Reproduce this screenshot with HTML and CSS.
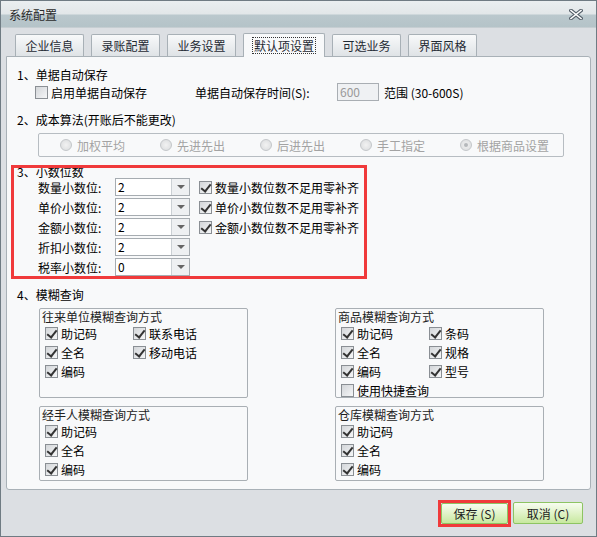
FILE: index.html
```html
<!DOCTYPE html>
<html lang="zh-CN">
<head>
    <meta charset="UTF-8">
    <title>系统配置</title>
    <link rel="stylesheet" href="styles.css">
</head>
<body>

<div class="window">
    <div class="titlebar">
        <span class="title">系统配置</span>
        <span class="close">
            <svg width="14" height="11" viewBox="0 0 14 11">
                <path d="M2 1.5 L12 9.5 M12 1.5 L2 9.5" stroke="#55606a" stroke-width="3.6" stroke-linecap="square"/>
                <path d="M2 1.5 L12 9.5 M12 1.5 L2 9.5" stroke="#ffffff" stroke-width="1.6" stroke-linecap="square"/>
            </svg>
        </span>
    </div>

    <div class="tabs">
        <div class="tab">企业信息</div>
        <div class="tab">录账配置</div>
        <div class="tab">业务设置</div>
        <div class="tab active"><span class="focus">默认项设置</span></div>
        <div class="tab">可选业务</div>
        <div class="tab">界面风格</div>
    </div>

    <div class="panel">
        <!-- 1. auto save -->
        <div class="heading">1、单据自动保存</div>
        <div class="autosave">
            <label class="check"><span class="cb"></span>启用单据自动保存</label>
            <span class="save-time">单据自动保存时间(S):</span>
            <span class="num-input">600</span>
            <span class="range">范围 (30-600S)</span>
        </div>

        <!-- 2. cost method -->
        <div class="heading h2">2、成本算法(开账后不能更改)</div>
        <div class="radios">
            <label class="radio"><span class="rb"></span>加权平均</label>
            <label class="radio"><span class="rb"></span>先进先出</label>
            <label class="radio"><span class="rb"></span>后进先出</label>
            <label class="radio"><span class="rb"></span>手工指定</label>
            <label class="radio"><span class="rb on"></span>根据商品设置</label>
        </div>

        <!-- 3. decimals -->
        <div class="decimals">
            <div class="heading h3">3、小数位数</div>
            <div class="dec-row">
                <span class="dec-label">数量小数位:</span>
                <span class="combo"><span class="val">2</span><span class="drop"><i></i></span></span>
                <label class="check"><span class="cb on"></span>数量小数位数不足用零补齐</label>
            </div>
            <div class="dec-row">
                <span class="dec-label">单价小数位:</span>
                <span class="combo"><span class="val">2</span><span class="drop"><i></i></span></span>
                <label class="check"><span class="cb on"></span>单价小数位数不足用零补齐</label>
            </div>
            <div class="dec-row">
                <span class="dec-label">金额小数位:</span>
                <span class="combo"><span class="val">2</span><span class="drop"><i></i></span></span>
                <label class="check"><span class="cb on"></span>金额小数位数不足用零补齐</label>
            </div>
            <div class="dec-row">
                <span class="dec-label">折扣小数位:</span>
                <span class="combo"><span class="val">2</span><span class="drop"><i></i></span></span>
            </div>
            <div class="dec-row">
                <span class="dec-label">税率小数位:</span>
                <span class="combo"><span class="val">0</span><span class="drop"><i></i></span></span>
            </div>
            <span class="mark"></span>
        </div>

        <!-- 4. fuzzy search -->
        <div class="heading h4">4、模糊查询</div>
        <div class="groups">
            <div class="group tall">
                <div class="group-title">往来单位模糊查询方式</div>
                <div class="opts">
                    <label class="check"><span class="cb on"></span>助记码</label>
                    <label class="check"><span class="cb on"></span>联系电话</label>
                    <label class="check"><span class="cb on"></span>全名</label>
                    <label class="check"><span class="cb on"></span>移动电话</label>
                    <label class="check"><span class="cb on"></span>编码</label>
                </div>
            </div>
            <div class="group tall">
                <div class="group-title">商品模糊查询方式</div>
                <div class="opts">
                    <label class="check"><span class="cb on"></span>助记码</label>
                    <label class="check"><span class="cb on"></span>条码</label>
                    <label class="check"><span class="cb on"></span>全名</label>
                    <label class="check"><span class="cb on"></span>规格</label>
                    <label class="check"><span class="cb on"></span>编码</label>
                    <label class="check"><span class="cb on"></span>型号</label>
                    <label class="check wide"><span class="cb"></span>使用快捷查询</label>
                </div>
            </div>
            <div class="group short">
                <div class="group-title">经手人模糊查询方式</div>
                <div class="opts single">
                    <label class="check"><span class="cb on"></span>助记码</label>
                    <label class="check"><span class="cb on"></span>全名</label>
                    <label class="check"><span class="cb on"></span>编码</label>
                </div>
            </div>
            <div class="group short">
                <div class="group-title">仓库模糊查询方式</div>
                <div class="opts single">
                    <label class="check"><span class="cb on"></span>助记码</label>
                    <label class="check"><span class="cb on"></span>全名</label>
                    <label class="check"><span class="cb on"></span>编码</label>
                </div>
            </div>
        </div>
    </div>

    <div class="footer">
        <span class="marked"><a class="button save">保存 (S)</a></span>
        <a class="button cancel">取消 (C)</a>
    </div>
</div>

</body>
</html>
```

FILE: styles.css
```css
* {
    box-sizing: border-box;
}
body {
    margin: 0;
    font-family: "Noto Sans CJK SC", "Liberation Sans", sans-serif;
    font-size: 12px;
    color: #000;
}
.window {
    width: 597px;
    height: 537px;
    border: 1px solid #6f7b83;
    background: #dcdfe3;
    display: flex;
    flex-direction: column;
}
.titlebar {
    height: 27px;
    flex: none;
    background: linear-gradient(#eaeef0 0, #e2e7e9 13px, #bac8cd 14px, #b4c3c8 100%);
    border-bottom: 1px solid #c6ced2;
    display: flex;
    align-items: center;
    justify-content: space-between;
    padding: 1px 13px 0 8px;
    color: #2b2b2b;
}
.close {
    display: flex;
}
.tabs {
    height: 28px;
    flex: none;
    display: flex;
    align-items: flex-end;
    gap: 7px;
    padding-left: 14px;
}
.tab {
    width: 69px;
    height: 22px;
    border: 1px solid #a8b0b6;
    border-bottom: none;
    border-radius: 2px 2px 0 0;
    background: linear-gradient(#f8f9fa, #dfe3e6);
    display: flex;
    align-items: center;
    justify-content: center;
    color: #1f2a33;
}
.tab.active {
    width: 82px;
    height: 24px;
    margin-bottom: -1px;
    background: #f8f9fa;
    position: relative;
    z-index: 1;
}
.tab .focus {
    border: 1px dotted #333;
    padding: 0 1px;
    line-height: 15px;
}
.panel {
    margin: 0 5px;
    height: 434px;
    flex: none;
    border: 1px solid #a9b1b7;
    border-radius: 0 3px 3px 3px;
    background: #f8f9fa;
    padding: 10px 0 0 10px;
}
.heading {
    height: 16px;
    line-height: 16px;
}
.h2 {
    margin-top: 11px;
}
.check {
    display: flex;
    align-items: center;
    gap: 3px;
    white-space: nowrap;
}
.cb {
    width: 13px;
    height: 13px;
    flex: none;
    border: 1px solid #8a8f94;
    background: linear-gradient(135deg, #d3d6d9, #f5f6f7);
    position: relative;
}
.cb.on::after {
    content: "";
    position: absolute;
    left: 3px;
    top: 0;
    width: 4px;
    height: 8px;
    border: solid #333;
    border-width: 0 2px 2px 0;
    transform: rotate(38deg);
}
.autosave {
    height: 18px;
    display: flex;
    align-items: center;
    margin-left: 18px;
}
.save-time {
    width: 142px;
    margin-left: 48px;
    white-space: nowrap;
}
.num-input {
    width: 42px;
    height: 18px;
    border: 1px solid #a9aeb3;
    background: #eff1f3;
    color: #9a9a9a;
    padding-left: 2px;
    line-height: 16px;
}
.range {
    margin-left: 5px;
}
.radios {
    width: 526px;
    height: 24px;
    margin: 5px 0 0 21px;
    border: 1px solid #b7bdc2;
    border-radius: 2px;
    display: flex;
    align-items: center;
    padding-left: 21px;
}
.radio {
    width: 100px;
    display: flex;
    align-items: center;
    gap: 5px;
    color: #a3a3a3;
}
.rb {
    width: 12px;
    height: 12px;
    flex: none;
    border-radius: 50%;
    border: 1px solid #c4c7ca;
    background: radial-gradient(#f2f2f2, #d9dbdd);
    display: flex;
    align-items: center;
    justify-content: center;
}
.rb.on::after {
    content: "";
    width: 4px;
    height: 4px;
    border-radius: 50%;
    background: #b5b8bb;
}
.decimals {
    position: relative;
    margin-top: 8px;
}
.h3 {
    height: 13px;
    line-height: 14px;
}
.dec-row {
    height: 20px;
    display: flex;
    align-items: flex-start;
    margin-left: 21px;
}
.dec-label {
    width: 77px;
    line-height: 20px;
}
.combo {
    width: 75px;
    height: 18px;
    border: 1px solid #a6acb1;
    background: #fff;
    display: flex;
}
.combo .val {
    flex: 1;
    padding-left: 2px;
    line-height: 16px;
}
.combo .drop {
    width: 18px;
    border-left: 1px solid #cbd0d4;
    background: #eef0f2;
    display: flex;
    align-items: center;
    justify-content: center;
}
.combo .drop i {
    width: 0;
    height: 0;
    border-left: 4px solid transparent;
    border-right: 4px solid transparent;
    border-top: 4px solid #666;
}
.dec-row .check {
    margin-left: 9px;
    height: 18px;
}
.mark {
    position: absolute;
    left: -6px;
    top: 0;
    width: 356px;
    height: 114px;
    border: 3px solid #f03a3b;
}
.h4 {
    margin-top: 9px;
}
.groups {
    margin: 5px 0 0 22px;
    display: grid;
    grid-template-columns: 209px 209px;
    column-gap: 87px;
    row-gap: 8px;
}
.group {
    border: 1px solid #a9afb4;
    border-radius: 2px;
    padding: 0 0 0 2px;
}
.group.tall {
    height: 90px;
}
.group.short {
    height: 75px;
}
.group-title {
    height: 15px;
    line-height: 15px;
    color: #222;
}
.opts {
    display: grid;
    grid-template-columns: 88px 88px;
    grid-auto-rows: 19px;
    padding-left: 3px;
}
.opts .check.wide {
    grid-column: span 2;
}
.opts.single {
    grid-template-columns: 88px;
}
.footer {
    flex: 1;
    display: flex;
    justify-content: flex-end;
    align-items: center;
    gap: 2px;
    padding-right: 13px;
}
.marked {
    display: flex;
    border: 3px solid #f03a3b;
}
.button {
    display: flex;
    align-items: center;
    justify-content: center;
    height: 22px;
    border: 1px solid #8dc463;
    border-radius: 2px;
    background: linear-gradient(#f7fcf0, #e0f3c8 50%, #c7e89f);
    color: #1c1c1c;
    text-decoration: none;
}
.button.save {
    width: 67px;
    height: 21px;
}
.button.cancel {
    width: 70px;
}
```
